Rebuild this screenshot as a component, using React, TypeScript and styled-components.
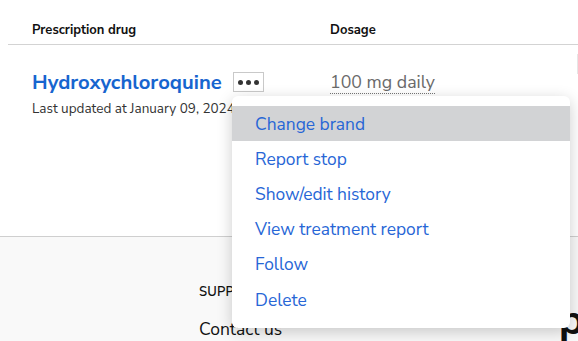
import React from "react";
import styled, { createGlobalStyle } from "styled-components";

const Global = createGlobalStyle`
  html, body { margin: 0; padding: 0; background: #fff; }
  body { font-family: "Nunito Sans", Lato, "Open Sans", sans-serif; overflow: hidden; }
  * { box-sizing: border-box; }
`;

const Page = styled.div`
  width: 578px;
  height: 341px;
  display: flex;
  flex-direction: column;
  overflow: hidden;
  position: relative;
`;

const TableArea = styled.section`
  height: 237px;
  flex-shrink: 0;
  padding: 0 0 0 8px;
  border-bottom: 1px solid #cfcfcf;
`;

const HeadRow = styled.div`
  display: grid;
  grid-template-columns: 298px 1fr;
  height: 45px;
  align-items: end;
  padding: 0 0 5px 24px;
  border-bottom: 1.5px solid #d3d3d3;
`;

const HeadCell = styled.div`
  font-size: 13px;
  font-weight: 700;
  color: #111;
`;

const BodyRow = styled.div`
  display: grid;
  grid-template-columns: 298px 1fr;
  padding: 25px 0 0 24px;
  position: relative;
`;

const DrugCell = styled.div`
  display: flex;
  flex-direction: column;
`;

const NameLine = styled.div`
  display: flex;
  align-items: center;
  gap: 11px;
`;

const DrugName = styled.a`
  font-size: 20.3px;
  font-weight: 700;
  color: #1765cf;
  text-decoration: none;
  line-height: 24px;
`;

const DotsButton = styled.button`
  width: 31px;
  height: 20px;
  border: 1px solid #c9c9c9;
  background: #fff;
  padding: 0;
  display: flex;
  align-items: center;
  justify-content: center;
  gap: 3px;
`;

const Dot = styled.span`
  width: 5px;
  height: 5px;
  border-radius: 50%;
  background: #333;
`;

const Updated = styled.div`
  font-size: 13.5px;
  color: #333;
  margin-top: 5px;
`;

const Dosage = styled.div`
  font-size: 17.8px;
  color: #6a6a6a;
  line-height: 22px;
  align-self: start;
  justify-self: start;
  border-bottom: 1px dotted #777;
  margin-top: 1px;
`;

const EdgeBar = styled.div`
  position: absolute;
  right: -2px;
  top: 9px;
  width: 3px;
  height: 20px;
  background: #e6e6e6;
`;

const MenuAnchor = styled.div`
  position: absolute;
  left: 232px;
  top: 74px;
`;

const Menu = styled.ul`
  position: absolute;
  left: 0;
  top: 22px;
  margin: 0;
  list-style: none;
  width: 338px;
  padding: 10px 0 11px;
  background: #fff;
  border-radius: 6px;
  box-shadow: 0 4px 16px rgba(0, 0, 0, 0.2);
  z-index: 10;
`;

const MenuItem = styled.li<{ $active?: boolean }>`
  height: 35.2px;
  display: flex;
  align-items: center;
  padding-left: 23px;
  font-size: 17.4px;
  color: #2766d6;
  background: ${(p) => (p.$active ? "#d2d3d5" : "transparent")};
`;

const Footer = styled.footer`
  flex: 1;
  background: #f9f9f9;
  display: flex;
  justify-content: space-between;
  padding: 46px 0 0 199px;
`;

const FooterCol = styled.div`
  display: flex;
  flex-direction: column;
`;

const FooterHead = styled.div`
  font-size: 13px;
  font-weight: 600;
  color: #111;
  letter-spacing: 0.2px;
`;

const FooterLink = styled.div`
  font-size: 17.5px;
  color: #111;
  margin-top: 16px;
`;

const Logo = styled.div`
  font-size: 42px;
  font-weight: 700;
  color: #111;
  margin-top: 17px;
  margin-right: -6px;
  line-height: 1;
`;

const items = [
  "Change brand",
  "Report stop",
  "Show/edit history",
  "View treatment report",
  "Follow",
  "Delete",
];

function ActionsMenu() {
  return (
    <MenuAnchor>
      <Menu>
        {items.map((t, i) => (
          <MenuItem key={t} $active={i === 0}>
            {t}
          </MenuItem>
        ))}
      </Menu>
    </MenuAnchor>
  );
}

export default function App() {
  return (
    <Page>
      <Global />
      <TableArea>
        <HeadRow>
          <HeadCell>Prescription drug</HeadCell>
          <HeadCell>Dosage</HeadCell>
        </HeadRow>
        <BodyRow>
          <DrugCell>
            <NameLine>
              <DrugName>Hydroxychloroquine</DrugName>
              <DotsButton aria-label="More">
                <Dot />
                <Dot />
                <Dot />
              </DotsButton>
            </NameLine>
            <Updated>Last updated at January 09, 2024</Updated>
          </DrugCell>
          <Dosage>100 mg daily</Dosage>
          <EdgeBar />
        </BodyRow>
      </TableArea>
      <Footer>
        <FooterCol>
          <FooterHead>SUPPORT</FooterHead>
          <FooterLink>Contact us</FooterLink>
        </FooterCol>
        <Logo>p</Logo>
      </Footer>
      <ActionsMenu />
    </Page>
  );
}
